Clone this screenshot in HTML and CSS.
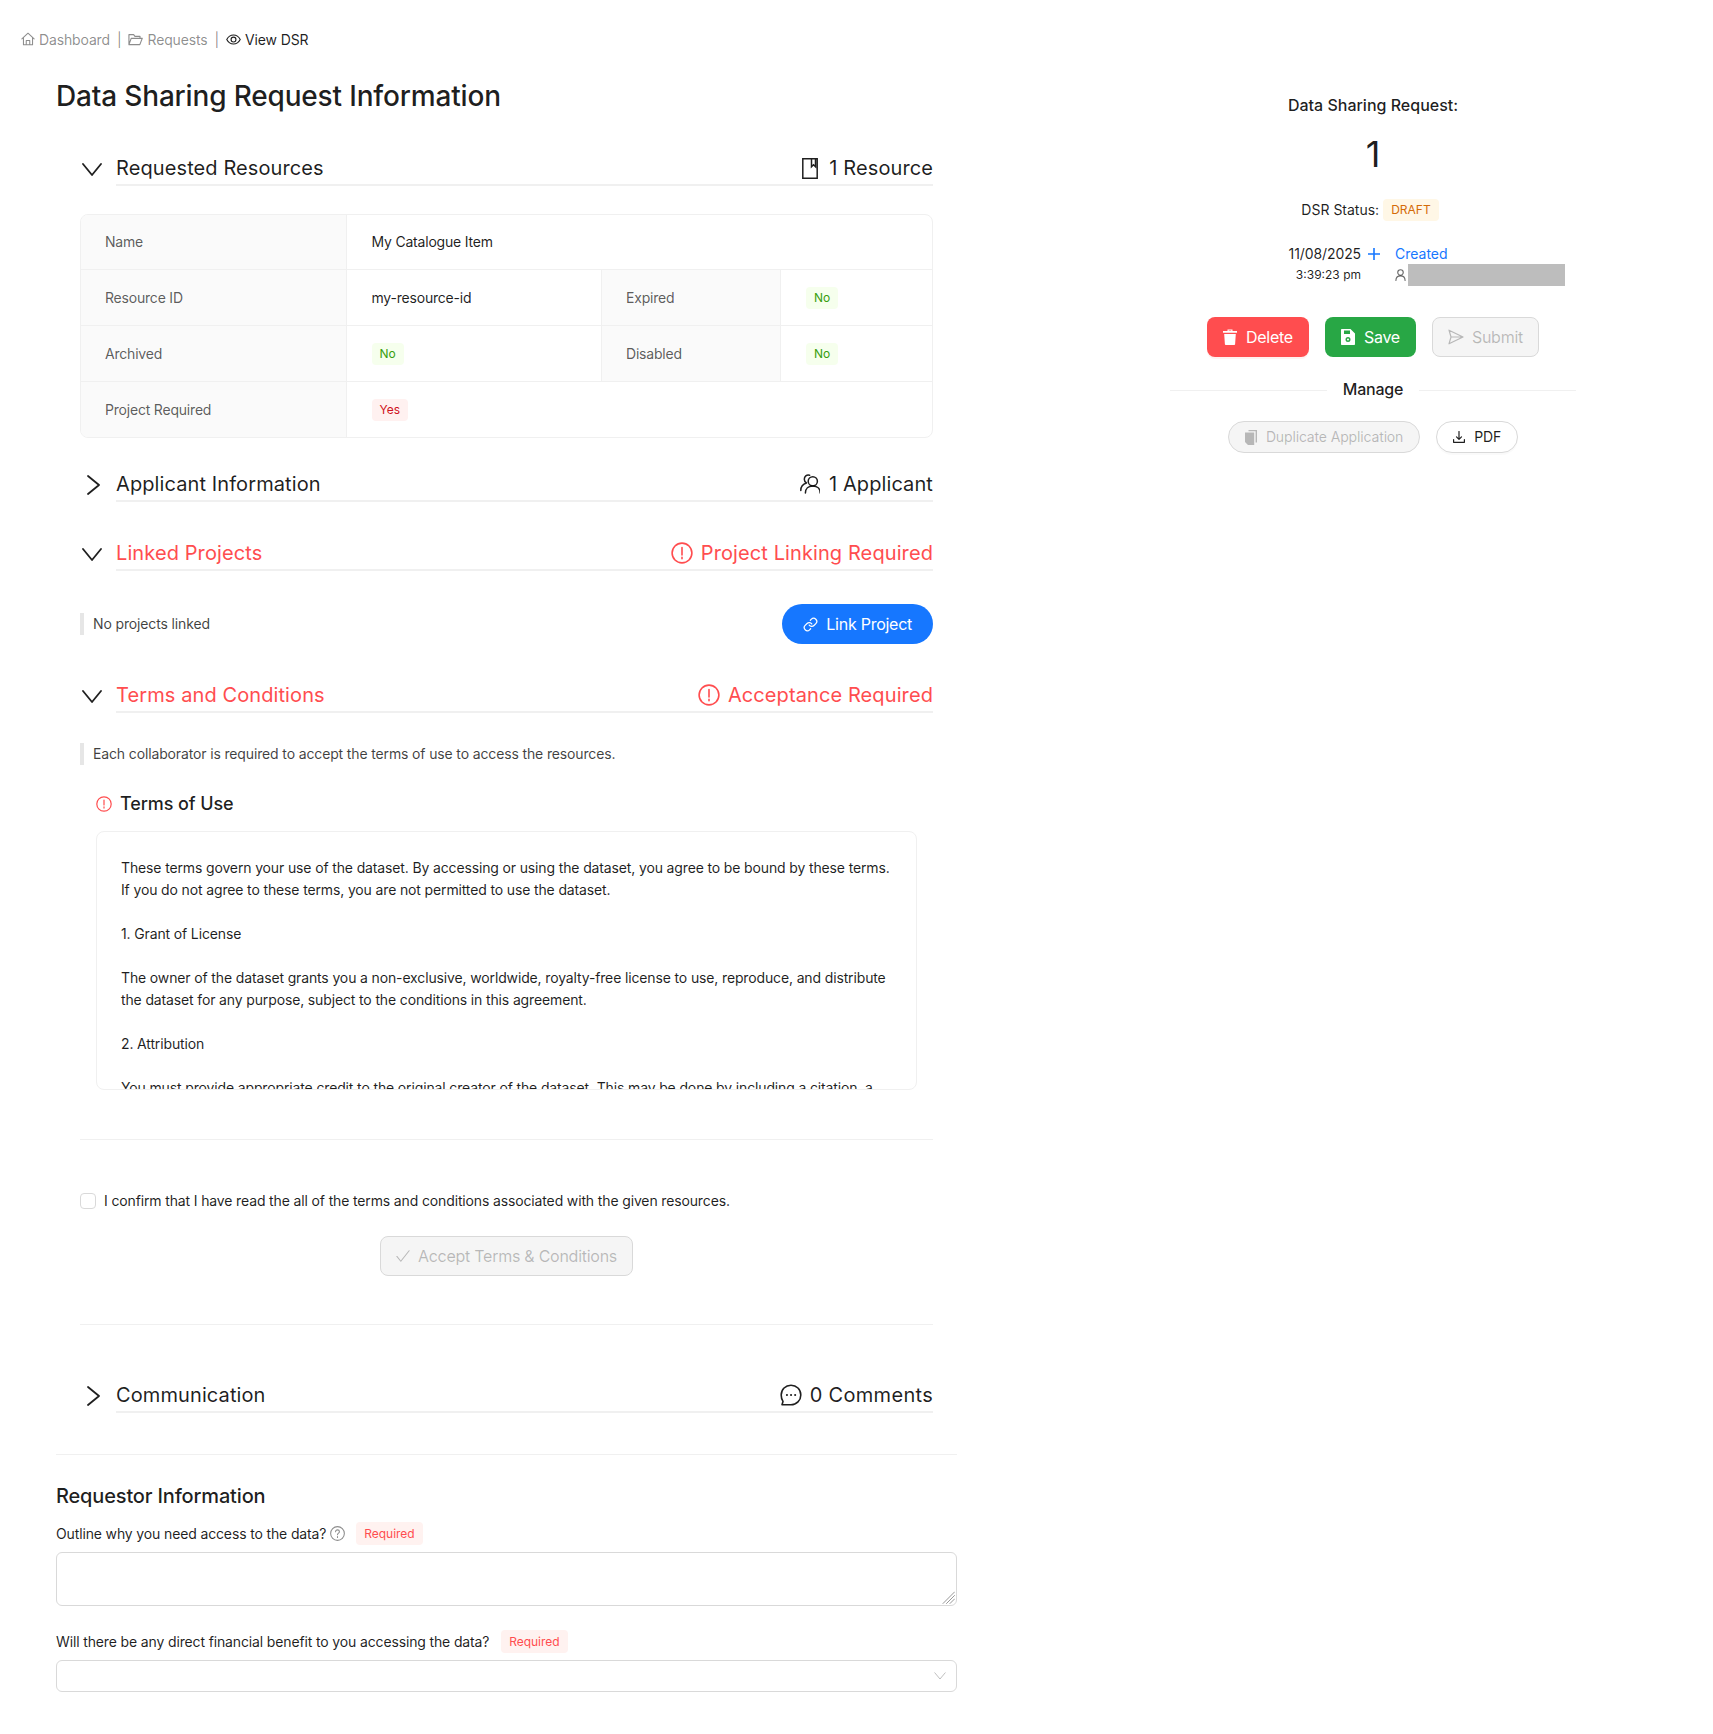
FILE: index.html
```html
<!DOCTYPE html>
<html lang="en">
<head>
<meta charset="utf-8">
<title>View DSR</title>
<link rel="stylesheet" href="styles.css">
</head>
<body>
<nav class="crumbs">
  <span class="crumb muted"><svg class="ico c14" viewBox="0 0 16 16"><path d="M1 7.800 8 1.400l7 6.400M2.800 6.600v8h10.400v-8M6 14.600V9.600h4v5"/></svg>Dashboard</span>
  <span class="sep">|</span>
  <span class="crumb muted"><svg class="ico c15" viewBox="0 0 16 16"><path d="M1 13.500V2.800h5l1.400 1.800h5.400v2.200M1 13.500h11.600l2.600-6.700H3.400L1 13.500Z"/></svg>Requests</span>
  <span class="sep">|</span>
  <span class="crumb"><svg class="ico c15" viewBox="0 0 16 16"><path d="M.8 8C2.500 4.800 5 3.200 8 3.200s5.500 1.600 7.200 4.800c-1.700 3.200-4.200 4.800-7.200 4.800S2.500 11.200.8 8Z"/><circle cx="8" cy="8" r="2.600"/></svg>View DSR</span>
</nav>

<div class="layout">
  <main class="main">
    <h1 class="title">Data Sharing Request Information</h1>
    <div class="inner">

      <section class="head">
        <svg class="ico chev" viewBox="0 0 20 13"><path d="M1 1l9 11 9-11"/></svg>
        <div class="head-row">
          <span>Requested Resources</span>
          <span class="head-right"><svg class="ico book" viewBox="0 0 16 21"><path d="M.8.800h14.400v19.400H.8zM9.500.8v8l2-2 2 2v-8"/></svg>1 Resource</span>
        </div>
      </section>

      <div class="table">
        <div class="cell label">Name</div>
        <div class="cell span3 end">My Catalogue Item</div>
        <div class="cell label">Resource ID</div>
        <div class="cell">my-resource-id</div>
        <div class="cell label">Expired</div>
        <div class="cell end"><span class="tag green">No</span></div>
        <div class="cell label">Archived</div>
        <div class="cell"><span class="tag green">No</span></div>
        <div class="cell label">Disabled</div>
        <div class="cell end"><span class="tag green">No</span></div>
        <div class="cell label last">Project Required</div>
        <div class="cell span3 end last"><span class="tag red">Yes</span></div>
      </div>

      <section class="head applicant">
        <svg class="ico chev-r" viewBox="0 0 15 20"><path d="M2 1l11 9-11 9"/></svg>
        <div class="head-row">
          <span>Applicant Information</span>
          <span class="head-right gap-tight"><svg class="ico users" viewBox="0 0 20 20"><circle cx="12.800" cy="7.300" r="4.600"/><path d="M5.400 19c0-4.500 3.100-7.100 7.400-7.100s7.400 2.600 7.400 7.100M9.600 1.200C6.500.3 4.300 2.500 4.300 5.200c0 1.700.8 3 2.200 3.800C2.800 10 .8 12.800.8 16.500"/></svg>1 Applicant</span>
        </div>
      </section>

      <section class="head linked">
        <svg class="ico chev" viewBox="0 0 20 13"><path d="M1 1l9 11 9-11"/></svg>
        <div class="head-row alert">
          <span>Linked Projects</span>
          <span class="head-right gap-warn"><svg class="ico warn" viewBox="0 0 22 22"><circle cx="11" cy="11" r="9.900"/><path d="M11 5.500v7.500M11 15.200v1.600"/></svg>Project Linking Required</span>
        </div>
      </section>

      <div class="link-row">
        <p class="note">No projects linked</p>
        <button class="btn primary round"><svg class="ico link" viewBox="0 0 24 24"><path d="M10 13a5 5 0 0 0 7.540.54l3-3a5 5 0 0 0-7.070-7.070l-1.720 1.710"/><path d="M14 11a5 5 0 0 0-7.540-.54l-3 3a5 5 0 0 0 7.070 7.070l1.710-1.710"/></svg>Link Project</button>
      </div>

      <section class="head terms">
        <svg class="ico chev" viewBox="0 0 20 13"><path d="M1 1l9 11 9-11"/></svg>
        <div class="head-row alert">
          <span>Terms and Conditions</span>
          <span class="head-right gap-warn"><svg class="ico warn" viewBox="0 0 22 22"><circle cx="11" cy="11" r="9.900"/><path d="M11 5.500v7.500M11 15.200v1.600"/></svg>Acceptance Required</span>
        </div>
      </section>

      <p class="note collab">Each collaborator is required to accept the terms of use to access the resources.</p>

      <h3 class="tou"><svg class="ico warn-s" viewBox="0 0 16 16"><circle cx="8" cy="8" r="7.200"/><path d="M8 4v5M8 10.800v1.300"/></svg>Terms of Use</h3>

      <div class="terms-box"><p>These terms govern your use of the dataset. By accessing or using the dataset, you agree to be bound by these terms. If you do not agree to these terms, you are not permitted to use the dataset.

1. Grant of License

The owner of the dataset grants you a non-exclusive, worldwide, royalty-free license to use, reproduce, and distribute the dataset for any purpose, subject to the conditions in this agreement.

2. Attribution

You must provide appropriate credit to the original creator of the dataset. This may be done by including a citation, a link to the source, or any other reasonable means.</p></div>

      <hr class="rule r1">

      <label class="confirm"><span class="box"></span>I confirm that I have read the all of the terms and conditions associated with the given resources.</label>

      <div class="accept-wrap">
        <button class="btn disabled"><svg class="ico check" viewBox="0 0 16 16"><path d="M1 8.500l4.500 5.500L15 2"/></svg>Accept Terms &amp; Conditions</button>
      </div>

      <hr class="rule r2">

      <section class="head comm">
        <svg class="ico chev-r" viewBox="0 0 15 20"><path d="M2 1l11 9-11 9"/></svg>
        <div class="head-row">
          <span>Communication</span>
          <span class="head-right gap-warn comments"><svg class="ico bubble" viewBox="0 0 22 22"><path d="M11 1.200c5.500 0 9.800 4.200 9.800 9.700S16.500 20.800 11 20.800H2l1-3.400C1.800 15.700 1.200 13.300 1.200 11 1.200 5.400 5.500 1.200 11 1.200Z"/><path class="dots" d="M6.900 11h.1M11 11h.1M15.100 11h.1"/></svg>0 Comments</span>
        </div>
      </section>
    </div>

    <hr class="rule r3">

    <h2 class="sub">Requestor Information</h2>

    <div class="q">Outline why you need access to the data? <svg class="ico help" viewBox="0 0 14 14"><circle cx="7" cy="7" r="6.400"/><path d="M5.200 5.400c0-1.100.8-1.800 1.800-1.800s1.800.7 1.800 1.700c0 1.400-1.800 1.400-1.800 2.900M7 9.800v.9"/></svg><span class="req">Required</span></div>
    <div class="area-wrap">
      <textarea class="area" aria-label="Outline why you need access to the data?"></textarea>
      <svg class="ico grip" viewBox="0 0 13 13"><path d="M12.500 1 1 12.500M12.500 4.500 4.500 12.500M12.500 8 8 12.500"/></svg>
    </div>

    <div class="q q2">Will there be any direct financial benefit to you accessing the data? <span class="req">Required</span></div>
    <div class="select"><svg class="ico sel-chev" viewBox="0 0 12 8"><path d="M.8.800 6 7l5.200-6.200"/></svg></div>
  </main>

  <aside class="side">
    <div class="side-title">Data Sharing Request:</div>
    <div class="side-num">1</div>
    <div class="status">DSR Status:<span class="tag amber">DRAFT</span></div>

    <div class="stamp">
      <span class="s-date">11/08/2025</span>
      <svg class="ico plus" viewBox="0 0 12 12"><path d="M6 0v12M0 6h12"/></svg>
      <span class="s-created">Created</span>
      <span class="s-time">3:39:23 pm</span>
      <span></span>
      <span class="s-user"><svg class="ico person" viewBox="0 0 12 13"><circle cx="6" cy="3.800" r="3"/><path d="M1 12.500c0-3.200 2-5 5-5s5 1.800 5 5"/></svg><span class="redact"></span></span>
    </div>

    <div class="actions">
      <button class="btn danger"><svg class="fill c14-w" viewBox="0 0 14 16"><path d="M4.500 2V.6h5V2H14v1.800H0V2h1Zm1.200 0h2.600V1.400H5.700ZM1.200 5h11.600l-.7 10.200c0 .5-.4.800-.9.800H2.800c-.5 0-.9-.3-.9-.8Z"/></svg>Delete</button>
      <button class="btn success"><svg class="fill c14-w" viewBox="0 0 14 16"><path fill-rule="evenodd" d="M1 0h8.500L14 4.500V15c0 .6-.4 1-1 1H1c-.6 0-1-.4-1-1V1c0-.6.4-1 1-1Zm2 1.500V5h6V1.500ZM7 8a2.500 2.500 0 1 0 0 5 2.500 2.500 0 0 0 0-5Zm0 1.500a1 1 0 1 1 0 2 1 1 0 0 1 0-2Z"/></svg>Save</button>
      <button class="btn disabled"><svg class="ico send" viewBox="0 0 16 16"><path d="M1 1.200 15 8 1 14.800 3 8Zm2 6.800h12"/></svg>Submit</button>
    </div>

    <div class="divider"><span>Manage</span></div>

    <div class="actions small">
      <button class="btn disabled round sm"><svg class="fill copy" viewBox="0 0 12 15"><path d="M3.500 0H12v12.500h-1.400V1.300H3.500ZM0 2.500h9.200V15H3l-3-3Z"/></svg>Duplicate Application</button>
      <button class="btn plain round sm"><svg class="ico dl" viewBox="0 0 12 12"><path d="M6 .5v7.500M3.500 5.800 6 8.300l2.500-2.500M.6 8.600v2.700h10.800V8.600"/></svg>PDF</button>
    </div>
  </aside>
</div>
</body>
</html>
```
FILE: styles.css
```css
* { box-sizing: border-box; }
html, body { margin: 0; padding: 0; }
body {
  font-family: Inter, "Liberation Sans", sans-serif;
  font-size: 14px;
  line-height: 22px;
  letter-spacing: -.14px;
  color: rgba(0, 0, 0, .88);
  background: #fff;
  min-height: 1734px;
}
p, h1, h2, h3, hr { margin: 0; }

.ico { fill: none; stroke: currentColor; stroke-width: 1.2; stroke-linecap: round; stroke-linejoin: round; flex: none; display: block; }
.fill { fill: currentColor; flex: none; display: block; }

.crumbs { display: flex; align-items: center; padding: 29px 0 0 21px; height: 51px; }
.crumb { display: flex; align-items: center; gap: 4px; }
.crumb .ico { margin-bottom: 2px; }
.muted { color: rgba(0, 0, 0, .45); }
.sep { color: rgba(0, 0, 0, .45); margin: 0 7px; }
.c14 { width: 14px; height: 14px; }
.c15 { width: 15px; height: 15px; }

.layout { display: flex; align-items: flex-start; }
.main { width: 901px; margin-left: 56px; padding-top: 27px; }
.title { font-size: 28px; line-height: 36px; font-weight: 500; letter-spacing: -.17px; }
.inner { margin: 38px 0 0 24px; width: 853px; }

.head { display: flex; align-items: center; }
.chev { width: 20px; height: 13px; margin: 0 14px 0 2px; stroke-width: 1.8; }
.chev-r { width: 15px; height: 20px; margin: 0 15px 0 6px; stroke-width: 1.8; }
.head-row {
  flex: 1; display: flex; justify-content: space-between; align-items: center;
  font-size: 20px; line-height: 32px; height: 34px; letter-spacing: .1px;
  border-bottom: 2px solid #f0f0f0;
}
.head-right { display: flex; align-items: center; gap: 11px; }
.gap-tight { gap: 9px; }
.gap-warn { gap: 8px; }
.comments { letter-spacing: .3px; }
.alert { color: #ff4d4f; }
.book { width: 16px; height: 21px; stroke-width: 1.5; stroke-linecap: butt; stroke-linejoin: miter; }
.users { width: 20px; height: 20px; stroke-width: 1.5; }
.warn { width: 22px; height: 22px; stroke-width: 1.6; }
.bubble { width: 22px; height: 22px; stroke-width: 1.6; }
.dots { stroke-width: 2; }

.table {
  display: grid; grid-template-columns: 265.5px 255.5px 179px 153px; grid-template-rows: 55px 56px 56px 55px;
  margin-top: 28px; border: 1px solid #f0f0f0; border-radius: 8px; overflow: hidden; letter-spacing: -.2px;
}
.cell { display: flex; align-items: center; padding: 0 24px 0 25px; border-right: 1px solid #f0f0f0; border-bottom: 1px solid #f0f0f0; }
.label { background: #fafafa; color: rgba(0, 0, 0, .65); padding-left: 24px; }
.span3 { grid-column: span 3; }
.end { border-right: 0; }
.last { border-bottom: 0; }

.tag { display: inline-block; font-size: 12px; line-height: 20px; padding: 0 7px; border: 1px solid transparent; border-radius: 4px; letter-spacing: 0; }
.green { color: #389e0d; background: #f6ffed; }
.red { color: #cf1322; background: #fff1f0; }
.amber { color: #d46b08; background: #fff7e6; }

.applicant { margin-top: 30px; }
.linked { margin-top: 35px; }
.terms { margin-top: 35px; }
.comm { margin-top: 54px; }

.link-row { display: flex; justify-content: space-between; align-items: center; margin-top: 33px; }
.note { border-left: 4px solid #e6e6e6; padding-left: 9px; color: rgba(0, 0, 0, .75); }
.collab { margin-top: 30px; }

.btn {
  display: inline-flex; align-items: center; gap: 9px; height: 40px; padding: 0 15px;
  font: inherit; font-size: 16px; letter-spacing: -.26px; border: 1px solid transparent; border-radius: 8px; background: #fff; color: inherit;
}
.primary { background: #1677ff; color: #fff; gap: 8px; padding: 0 20px; }
.round { border-radius: 20px; }
.link { width: 15px; height: 15px; stroke-width: 2; }
.danger { background: #ff4d4f; color: #fff; box-shadow: 0 2px 0 rgba(255, 38, 5, .06); }
.success { background: #28a745; color: #fff; }
.disabled { background: #f5f5f5; border-color: #d9d9d9; color: rgba(0, 0, 0, .25); gap: 8px; }
.plain { border-color: #d9d9d9; box-shadow: 0 2px 0 rgba(0, 0, 0, .02); }
.c14-w { width: 14px; height: 16px; }

.tou { display: flex; align-items: center; gap: 8px; margin: 25px 0 0 16px; font-size: 18px; line-height: 28px; font-weight: 500; letter-spacing: -.1px; }
.warn-s { width: 16px; height: 16px; color: #ff4d4f; }

.terms-box {
  margin: 13px 0 0 16px; width: 821px; height: 259px; padding: 25px 24px 0; overflow: hidden;
  border: 1px solid #f0f0f0; border-radius: 8px;
}
.terms-box p { white-space: pre-line; }

.rule { border: 0; border-top: 1px solid #f0f0f0; }
.r1 { margin-top: 49px; }
.r2 { margin-top: 48px; }
.r3 { margin-top: 41px; }

.confirm { display: flex; align-items: center; gap: 8px; margin-top: 50px; }
.box { width: 16px; height: 16px; border: 1px solid #d9d9d9; border-radius: 4px; background: #fff; }
.accept-wrap { display: flex; justify-content: center; margin-top: 24px; }
.check { width: 14px; height: 14px; }

.sub { font-size: 20px; line-height: 28px; font-weight: 500; margin-top: 27px; letter-spacing: -.16px; }
.q { display: flex; align-items: center; height: 23px; margin-top: 12px; white-space: pre; }
.q2 { margin-top: 24px; }
.help { width: 15px; height: 15px; color: rgba(0, 0, 0, .45); stroke-width: 1; }
.req { margin-left: 11px; padding: 0 8px; font-size: 12px; line-height: 23px; color: #ff4d4f; background: #fff2f0; border-radius: 4px; letter-spacing: 0; }
.q2 .req { margin-left: 8px; }
.area-wrap { position: relative; margin-top: 7px; }
.area { display: block; width: 901px; height: 54px; border: 1px solid #d9d9d9; border-radius: 6px; outline: 0; resize: none; }
.grip { position: absolute; right: 2px; bottom: 2px; width: 13px; height: 13px; color: #8c8c8c; stroke-width: .9; pointer-events: none; }
.select {
  display: flex; align-items: center; justify-content: flex-end; width: 901px; height: 32px; margin-top: 7px;
  padding-right: 10px; border: 1px solid #d9d9d9; border-radius: 6px;
}
.sel-chev { width: 12px; height: 8px; color: rgba(0, 0, 0, .25); stroke-width: 1; }

.side { width: 406px; margin: 42px 0 0 213px; text-align: center; letter-spacing: 0; }
.side-title { font-size: 16px; line-height: 24px; font-weight: 500; }
.side-num { font-size: 36px; line-height: 44px; margin-top: 15px; }
.status { display: flex; justify-content: center; align-items: center; gap: 4px; margin-top: 23px; padding-right: 6px; }
.stamp { display: grid; grid-template-columns: 191px 34px 1fr; margin-top: 23px; text-align: left; align-items: center; grid-auto-rows: 20.5px; }
.s-date { text-align: right; letter-spacing: -.1px; }
.plus { width: 12px; height: 12px; margin-left: 7px; color: #1677ff; stroke-width: 1.6; stroke-linecap: butt; }
.s-created { color: #1677ff; }
.s-time { text-align: right; font-size: 12px; }
.s-user { display: flex; align-items: center; gap: 2px; }
.person { width: 11px; height: 12px; color: rgba(0, 0, 0, .6); }
.redact { width: 157px; height: 22px; background: #bdbdbd; }
.actions { display: flex; justify-content: center; gap: 16px; margin-top: 32px; }
.send { width: 16px; height: 16px; }
.divider { display: flex; align-items: center; margin-top: 20px; font-size: 16px; line-height: 24px; font-weight: 500; gap: 16px; letter-spacing: -.2px; }
.divider::before, .divider::after { content: ""; flex: 1; border-top: 1px solid #f0f0f0; margin-top: 2px; }
.small { margin-top: 20px; }
.sm { height: 32px; font-size: 14px; padding: 0 16px; gap: 9px; border-radius: 16px; letter-spacing: -.15px; }
.copy { width: 12px; height: 15px; }
.dl { width: 12px; height: 12px; }
```
